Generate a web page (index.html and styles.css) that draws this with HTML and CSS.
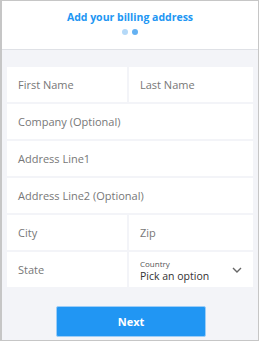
FILE: index.html
```html
<!DOCTYPE html>
<html lang="en">
  <head>
    <meta charset="UTF-8" />
    <meta name="viewport" content="width=device-width, initial-scale=1.0" />
    <title>Billing Address</title>
    <link rel="stylesheet" href="styles.css">
  </head>
  <body>
    <div class="frame">
      <div class="header">
        <h3>Add your billing address</h3>
        <div class="dots">
          <span class="dot"></span>
          <span class="dot active"></span>
        </div>
      </div>

      <div class="content">
        <div class="form">
          <div class="field">First Name</div>
          <div class="field">Last Name</div>
          <div class="field wide">Company (Optional)</div>
          <div class="field wide">Address Line1</div>
          <div class="field wide">Address Line2 (Optional)</div>
          <div class="field">City</div>
          <div class="field">Zip</div>
          <div class="field">State</div>
          <div class="field select">
            <div class="select-text">
              <span class="label">Country</span>
              <span class="value">Pick an option</span>
            </div>
            <svg class="chevron" width="10" height="6" viewBox="0 0 10 6">
              <path d="M1 1 L5 5 L9 1" fill="none" stroke="#666" stroke-width="1.4" />
            </svg>
          </div>
        </div>

        <div class="actions">
          <button>Next</button>
        </div>
      </div>
    </div>
  </body>
</html>
```

FILE: styles.css
```css
body {
  margin: 0;
  font-family: "Open Sans", "Noto Sans", Arial, sans-serif;
}
.frame {
  width: 259px;
  height: 341px;
  box-sizing: border-box;
  border: 1px solid #c6c6c6;
  border-left-width: 2px;
  display: flex;
  flex-direction: column;
  background: #f3f4f8;
}
.header {
  height: 48px;
  background: #fff;
  border-bottom: 1px solid #dfe1e6;
  display: flex;
  flex-direction: column;
  align-items: center;
}
.header h3 {
  margin: 9px 0 0;
  font-size: 10.5px;
  font-weight: bold;
  color: #2196f3;
  line-height: 14px;
}
.dots {
  display: flex;
  gap: 4px;
  margin-top: 5px;
}
.dot {
  width: 6px;
  height: 6px;
  border-radius: 50%;
  background: #b5d9f8;
}
.dot.active {
  background: #64b1f2;
}
.content {
  flex: 1;
  padding: 17px 5px 0 5px;
}
.form {
  display: grid;
  grid-template-columns: 120px 1fr;
  gap: 2px;
  background: #f3f4f8;
}
.field {
  background: #fff;
  height: 35px;
  padding: 0 11px;
  display: flex;
  align-items: center;
  font-size: 11px;
  color: #777;
}
.wide {
  grid-column: span 2;
}
.select {
  justify-content: space-between;
  padding-left: 11px;
  padding-right: 11px;
}
.select-text {
  display: flex;
  flex-direction: column;
  margin-top: 2px;
}
.label {
  font-size: 8px;
  color: #555;
  line-height: 10px;
}
.value {
  font-size: 10.5px;
  color: #333;
  line-height: 14px;
}
.actions {
  display: flex;
  justify-content: center;
  margin-top: 19px;
}
button {
  width: 150px;
  height: 31px;
  margin-left: 2px;
  background: #2196f3;
  color: #fff;
  border: 1px solid #9ccdf7;
  border-radius: 2px;
  font-family: inherit;
  font-size: 11px;
  font-weight: bold;
}
```
